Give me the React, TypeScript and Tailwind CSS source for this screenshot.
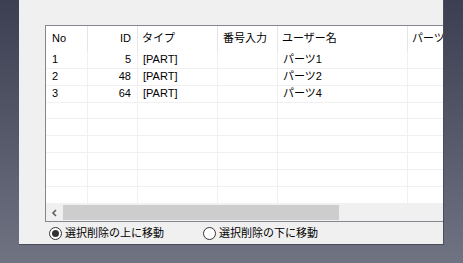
import React from 'react'

type Row = { no: string; id: string; type: string; num: string; user: string; part: string }

const rows: Row[] = [
  { no: '1', id: '5', type: '[PART]', num: '', user: 'パーツ1', part: '' },
  { no: '2', id: '48', type: '[PART]', num: '', user: 'パーツ2', part: '' },
  { no: '3', id: '64', type: '[PART]', num: '', user: 'パーツ4', part: '' },
]

const font = { fontFamily: '"Liberation Sans", "Noto Sans CJK JP", sans-serif' }

const cols = 'grid grid-cols-[42px_50px_80px_60px_130px_120px]'

function Radio({ checked, label }: { checked: boolean; label: string }) {
  return (
    <div className="flex items-center gap-[3px]">
      <span className="w-[13px] h-[13px] rounded-full border border-[#333333] bg-white flex items-center justify-center">
        {checked && <span className="w-[7px] h-[7px] rounded-full bg-[#333333]" />}
      </span>
      <span className="text-[11px] text-black leading-none">{label}</span>
    </div>
  )
}

export default function App() {
  const blanks = Array.from({ length: 9 - rows.length })

  return (
    <div
      className="w-[463px] h-[263px] overflow-hidden bg-gradient-to-b from-[#3b3f51] to-[#6f7382] pl-[19px]"
      style={font}
    >
      <div className="w-[425px] h-[245px] overflow-hidden bg-[#f0f0f0] border-r border-b border-[#4b4e58] pt-[25px] pl-[26px]">
        <div className="w-[500px] border-t border-l border-b border-[#828790] bg-white">
          {/* header */}
          <div className={`${cols} h-[25px] text-[11px] text-black`}>
            <div className="flex items-center pl-[6px] border-r border-[#e5e5e5]">No</div>
            <div className="flex items-center justify-end pr-[6px] border-r border-[#e5e5e5]">ID</div>
            <div className="flex items-center pl-[4px] border-r border-[#e5e5e5]">タイプ</div>
            <div className="flex items-center pl-[5px] border-r border-[#e5e5e5]">番号入力</div>
            <div className="flex items-center pl-[4px] border-r border-[#e5e5e5]">ユーザー名</div>
            <div className="flex items-center pl-[4px]">パーツ名</div>
          </div>

          {/* rows */}
          {rows.map((r) => (
            <div key={r.no} className={`${cols} h-[17px] text-[11px] text-black`}>
              <div className="flex items-center pl-[6px] border-r border-b border-[#f0f0f0]">{r.no}</div>
              <div className="flex items-center justify-end pr-[6px] border-r border-b border-[#f0f0f0]">{r.id}</div>
              <div className="flex items-center pl-[5px] border-r border-b border-[#f0f0f0]">{r.type}</div>
              <div className="flex items-center pl-[5px] border-r border-b border-[#f0f0f0]">{r.num}</div>
              <div className="flex items-center pl-[5px] border-r border-b border-[#f0f0f0]">{r.user}</div>
              <div className="flex items-center pl-[5px] border-b border-[#f0f0f0]">{r.part}</div>
            </div>
          ))}
          {blanks.map((_, i) => (
            <div key={i} className={`${cols} h-[17px]`}>
              <div className="border-r border-b border-[#f0f0f0]" />
              <div className="border-r border-b border-[#f0f0f0]" />
              <div className="border-r border-b border-[#f0f0f0]" />
              <div className="border-r border-b border-[#f0f0f0]" />
              <div className="border-r border-b border-[#f0f0f0]" />
              <div className="border-b border-[#f0f0f0]" />
            </div>
          ))}

          {/* horizontal scrollbar */}
          <div className="flex h-[17px] bg-[#f0f0f0]">
            <div className="w-[17px] flex items-center justify-center">
              <svg width="7" height="8" viewBox="0 0 7 8">
                <path d="M5 1 L2 4 L5 7" fill="none" stroke="#606060" strokeWidth="1.6" />
              </svg>
            </div>
            <div className="w-[276px] my-[1px] bg-[#cdcdcd]" />
          </div>
        </div>

        {/* radio options */}
        <div className="flex items-center h-[23px] pl-[4px]">
          <div className="w-[154px]">
            <Radio checked label="選択削除の上に移動" />
          </div>
          <Radio checked={false} label="選択削除の下に移動" />
        </div>
      </div>
    </div>
  )
}
